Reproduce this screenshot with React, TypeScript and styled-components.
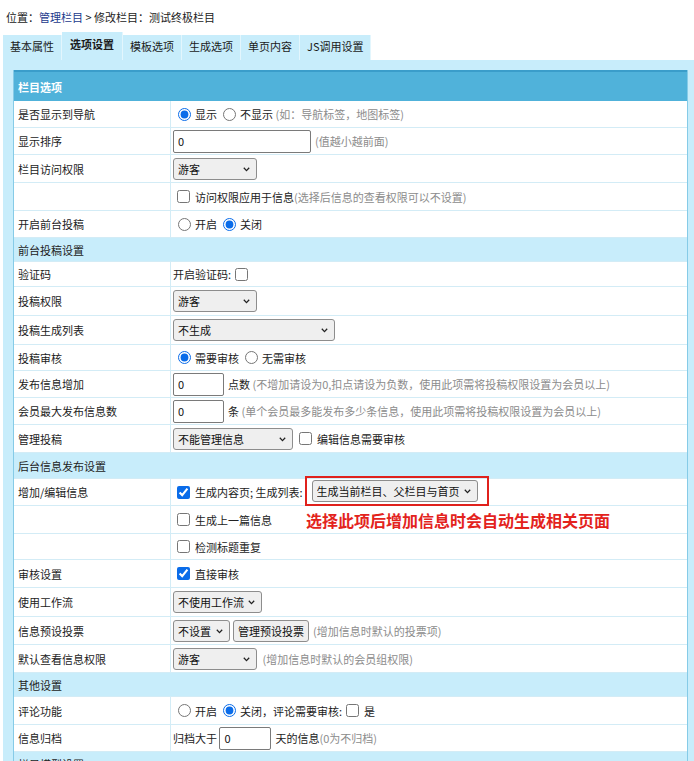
import React from 'react';
import styled, { createGlobalStyle } from 'styled-components';

const GlobalStyle = createGlobalStyle`
  * { box-sizing: border-box; }
  html, body { overflow: hidden; }
  body {
    margin: 0;
    background: #fff;
    font-family: "Noto Sans CJK SC", "Noto Sans", sans-serif;
    font-size: 11px;
    color: #222;
  }
`;

const Crumb = styled.div`
  height: 33px;
  display: flex;
  align-items: center;
  padding-left: 6px;
  white-space: pre;
`;

const CrumbLink = styled.a`
  color: #1b3a8c;
  text-decoration: none;
`;

const TabBar = styled.div`
  display: flex;
  align-items: flex-end;
  height: 27px;
  padding-left: 3px;
`;

const Tab = styled.div<{ $active?: boolean }>`
  height: ${p => (p.$active ? 28 : 25)}px;
  padding: 0 ${p => (p.$active ? 8 : 7)}px ${p => (p.$active ? 5 : 3)}px;
  display: flex;
  align-items: center;
  background: #c8edfb;
  border-right: 1px solid #e3f6fd;
  font-weight: ${p => (p.$active ? 700 : 400)};
  color: #1a1a1a;
`;

const Panel = styled.div`
  margin-left: 3px;
  background: #c8edfb;
  padding: 10px 6px 0 10px;
`;

const Table = styled.div`
  background: #fff;
  border-left: 1px solid #86cbe7;
  border-right: 1px solid #86cbe7;
`;

const Head = styled.div`
  height: 31px;
  border-top: 2px solid #3a9dca;
  background: #50b2da;
  color: #fff;
  font-weight: 700;
  display: flex;
  align-items: center;
  padding-left: 4px;
`;

const Row = styled.div<{ $h: number }>`
  display: flex;
  height: ${p => p.$h}px;
  border-bottom: 1px solid #d3ecf6;
`;

const Section = styled.div<{ $h: number }>`
  height: ${p => p.$h}px;
  background: #c8edfb;
  border-bottom: 1px solid #d3ecf6;
  display: flex;
  align-items: center;
  padding-left: 4px;
`;

const Label = styled.div`
  width: 157px;
  flex: none;
  border-right: 1px solid #d3ecf6;
  padding-left: 4px;
  display: flex;
  align-items: center;
`;

const Value = styled.div`
  flex: 1;
  display: flex;
  align-items: center;
  padding-left: 2px;
  white-space: nowrap;
`;

const Radio = styled.input.attrs({ type: 'radio' })<{ $gap?: number }>`
  width: 13px;
  height: 13px;
  margin: 0 4px 0 ${p => p.$gap ?? 5}px;
  accent-color: #0a6ce9;
`;

const Check = styled.input.attrs({ type: 'checkbox' })<{ $gap?: number }>`
  width: 13px;
  height: 13px;
  margin: 0 5px 0 ${p => p.$gap ?? 4}px;
  accent-color: #0a6ce9;
`;

const Hint = styled.span`
  color: #8c8c8c;
`;

const TextInput = styled.input<{ $w: number }>`
  width: ${p => p.$w}px;
  height: 23px;
  border: 1px solid #7a7a7a;
  border-radius: 2px;
  padding: 0 4px;
  font: inherit;
  color: #111;
  margin-right: 4px;
`;

const SelectWrap = styled.span<{ $w: number }>`
  position: relative;
  display: inline-flex;
  flex: none;
  width: ${p => p.$w}px;
  height: 22px;
  margin-right: 3px;
`;

const Select = styled.select`
  appearance: none;
  width: 100%;
  height: 100%;
  border: 1px solid #8d8d8d;
  border-radius: 3px;
  background: #efefef;
  font: inherit;
  color: #111;
  padding: 0 14px 0 4px;
`;

const Chevron = styled.svg`
  position: absolute;
  right: 7px;
  top: 9px;
  pointer-events: none;
`;

const Button = styled.button`
  height: 22px;
  padding: 0 4px;
  border: 1px solid #8d8d8d;
  border-radius: 3px;
  background: #efefef;
  font: inherit;
  color: #111;
  margin-right: 4px;
`;

const Callout = styled.span`
  display: inline-flex;
  align-items: center;
  height: 30px;
  margin-top: -3px;
  margin-left: 2px;
  padding: 0 6px 0 5px;
  border: 2px solid #e0211c;
`;

const Note = styled.span`
  margin-left: 34px;
  color: #e3231d;
  font-size: 16px;
  font-weight: 700;
`;

type DropProps = { w: number; value: string };

const Drop = ({ w, value }: DropProps) => (
  <SelectWrap $w={w}>
    <Select defaultValue={value}>
      <option>{value}</option>
    </Select>
    <Chevron width="7" height="5" viewBox="0 0 7 5">
      <path d="M0.8 0.8 L3.5 3.6 L6.2 0.8" fill="none" stroke="#222" strokeWidth="1.3" />
    </Chevron>
  </SelectWrap>
);

const tabs = ['基本属性', '选项设置', '模板选项', '生成选项', '单页内容', 'JS调用设置'];

export default function App() {
  return (
    <>
      <GlobalStyle />
      <Crumb>
        位置：<CrumbLink href="#">管理栏目</CrumbLink> &gt; 修改栏目：测试终极栏目
      </Crumb>
      <TabBar>
        {tabs.map(t => (
          <Tab key={t} $active={t === '选项设置'}>{t}</Tab>
        ))}
      </TabBar>
      <Panel>
        <Table>
          <Head>栏目选项</Head>
          <Row $h={27}>
            <Label>是否显示到导航</Label>
            <Value>
              <Radio name="nav" defaultChecked />显示
              <Radio name="nav" $gap={6} />不显示
              <Hint>&nbsp;(如：导航标签，地图标签)</Hint>
            </Value>
          </Row>
          <Row $h={27}>
            <Label>显示排序</Label>
            <Value>
              <TextInput $w={138} defaultValue="0" />
              <Hint>(值越小越前面)</Hint>
            </Value>
          </Row>
          <Row $h={28}>
            <Label>栏目访问权限</Label>
            <Value><Drop w={84} value="游客" /></Value>
          </Row>
          <Row $h={28}>
            <Label />
            <Value>
              <Check />访问权限应用于信息<Hint>(选择后信息的查看权限可以不设置)</Hint>
            </Value>
          </Row>
          <Row $h={27}>
            <Label>开启前台投稿</Label>
            <Value>
              <Radio name="post" />开启
              <Radio name="post" $gap={6} defaultChecked />关闭
            </Value>
          </Row>
          <Section $h={24}>前台投稿设置</Section>
          <Row $h={25}>
            <Label>验证码</Label>
            <Value>开启验证码:<Check /></Value>
          </Row>
          <Row $h={29}>
            <Label>投稿权限</Label>
            <Value><Drop w={84} value="游客" /></Value>
          </Row>
          <Row $h={29}>
            <Label>投稿生成列表</Label>
            <Value><Drop w={162} value="不生成" /></Value>
          </Row>
          <Row $h={26}>
            <Label>投稿审核</Label>
            <Value>
              <Radio name="check" defaultChecked />需要审核
              <Radio name="check" $gap={6} />无需审核
            </Value>
          </Row>
          <Row $h={27}>
            <Label>发布信息增加</Label>
            <Value>
              <TextInput $w={51} defaultValue="0" />点数
              <Hint>&nbsp;(不增加请设为0,扣点请设为负数，使用此项需将投稿权限设置为会员以上)</Hint>
            </Value>
          </Row>
          <Row $h={27}>
            <Label>会员最大发布信息数</Label>
            <Value>
              <TextInput $w={51} defaultValue="0" />条
              <Hint>&nbsp;(单个会员最多能发布多少条信息，使用此项需将投稿权限设置为会员以上)</Hint>
            </Value>
          </Row>
          <Row $h={28}>
            <Label>管理投稿</Label>
            <Value>
              <Drop w={120} value="不能管理信息" />
              <Check $gap={3} />编辑信息需要审核
            </Value>
          </Row>
          <Section $h={26}>后台信息发布设置</Section>
          <Row $h={27}>
            <Label>增加/编辑信息</Label>
            <Value>
              <Check defaultChecked />生成内容页;&nbsp;生成列表:
              <Callout><Drop w={166} value="生成当前栏目、父栏目与首页" /></Callout>
            </Value>
          </Row>
          <Row $h={28}>
            <Label />
            <Value>
              <Check />生成上一篇信息
              <Note>选择此项后增加信息时会自动生成相关页面</Note>
            </Value>
          </Row>
          <Row $h={26}>
            <Label />
            <Value><Check />检测标题重复</Value>
          </Row>
          <Row $h={28}>
            <Label>审核设置</Label>
            <Value><Check defaultChecked />直接审核</Value>
          </Row>
          <Row $h={29}>
            <Label>使用工作流</Label>
            <Value><Drop w={89} value="不使用工作流" /></Value>
          </Row>
          <Row $h={28}>
            <Label>信息预设投票</Label>
            <Value>
              <Drop w={57} value="不设置" />
              <Button>管理预设投票</Button>
              <Hint>(增加信息时默认的投票项)</Hint>
            </Value>
          </Row>
          <Row $h={28}>
            <Label>默认查看信息权限</Label>
            <Value>
              <Drop w={84} value="游客" />
              <Hint>&nbsp;(增加信息时默认的会员组权限)</Hint>
            </Value>
          </Row>
          <Section $h={24}>其他设置</Section>
          <Row $h={28}>
            <Label>评论功能</Label>
            <Value>
              <Radio name="pl" />开启
              <Radio name="pl" $gap={6} defaultChecked />关闭，评论需要审核:
              <Check />是
            </Value>
          </Row>
          <Row $h={27}>
            <Label>信息归档</Label>
            <Value>
              归档大于&nbsp;<TextInput $w={52} defaultValue="0" />天的信息<Hint>(0为不归档)</Hint>
            </Value>
          </Row>
          <Section $h={24}>栏目模型设置</Section>
        </Table>
      </Panel>
    </>
  );
}
